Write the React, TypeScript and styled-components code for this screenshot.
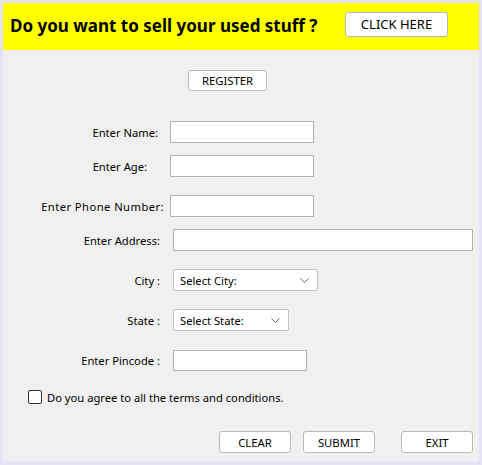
import styled, { createGlobalStyle } from "styled-components";

const GlobalStyle = createGlobalStyle`
  body {
    margin: 0;
    font-family: "Noto Sans", "Open Sans", Arial, sans-serif;
  }
`;

const Frame = styled.div`
  width: 482px;
  height: 465px;
  box-sizing: border-box;
  padding: 3px 3px 4px 3px;
  background: #e4e4f6;
`;

const Panel = styled.div`
  height: 100%;
  background: #f0f0f0;
  display: flex;
  flex-direction: column;
`;

const Banner = styled.div`
  height: 47px;
  background: #ffff00;
  display: flex;
  align-items: center;
  padding-left: 7px;
`;

const Heading = styled.h1`
  margin: 0 0 3px 0;
  font-size: 17px;
  font-weight: 700;
  color: #000;
`;

const WinButton = styled.button<{ $w: number; $h?: number; $gap?: number }>`
  width: ${(p) => p.$w}px;
  height: ${(p) => p.$h ?? 22}px;
  margin-left: ${(p) => p.$gap ?? 0}px;
  box-sizing: border-box;
  background: #fff;
  border: 1px solid #b9b9b9;
  border-radius: 3px;
  font-family: "Noto Sans", "Open Sans", Arial, sans-serif;
  font-size: 11.3px;
  color: #000;
  padding: 0;
  cursor: pointer;
`;

const ClickButton = styled(WinButton)`
  margin-left: auto;
  margin-right: 31px;
  margin-bottom: 5px;
  font-size: 13px;
`;

const RegisterRow = styled.div`
  margin-top: 20px;
  padding-left: 185px;
  display: flex;
`;

const Row = styled.div<{ $top: number }>`
  margin-top: ${(p) => p.$top}px;
  height: 22px;
  display: flex;
  align-items: center;
`;

const Label = styled.label<{ $end: number; $spacing?: number }>`
  width: ${(p) => p.$end - 3}px;
  flex: none;
  text-align: right;
  font-size: 11.2px;
  letter-spacing: ${(p) => p.$spacing ?? 0}px;
  color: #000;
  white-space: nowrap;
`;

const TextBox = styled.input<{ $gap: number; $w: number; $h?: number }>`
  margin-left: ${(p) => p.$gap}px;
  width: ${(p) => p.$w}px;
  height: ${(p) => p.$h ?? 22}px;
  box-sizing: border-box;
  border: 1px solid #b4b4b4;
  background: #fff;
  padding: 0 4px;
  font-size: 11.2px;
  outline: none;
`;

const Combo = styled.div<{ $gap: number; $w: number }>`
  margin-left: ${(p) => p.$gap}px;
  width: ${(p) => p.$w}px;
  height: 22px;
  box-sizing: border-box;
  border: 1px solid #c4c4c4;
  border-radius: 2px;
  background: #fff;
  display: flex;
  align-items: center;
  justify-content: space-between;
  padding: 0 8px 0 6px;
  font-size: 11.2px;
  color: #000;
`;

const CheckRow = styled.div`
  margin-top: 15px;
  height: 22px;
  padding-left: 25px;
  display: flex;
  align-items: center;
  gap: 5px;
  font-size: 11.2px;
  color: #000;
`;

const CheckBox = styled.span`
  width: 14px;
  height: 14px;
  box-sizing: border-box;
  border: 1px solid #333;
  border-radius: 2px;
  background: #fff;
`;

const Actions = styled.div`
  margin-top: 23px;
  padding-left: 216px;
  display: flex;
`;

const Chevron = () => (
  <svg width="9" height="5" viewBox="0 0 9 5">
    <path d="M0.5 0.5 L4.5 4.5 L8.5 0.5" fill="none" stroke="#6a6a6a" strokeWidth="1" />
  </svg>
);

type Field = {
  label: string;
  top: number;
  end: number;
  x: number;
  w: number;
  h?: number;
  spacing?: number;
  select?: string;
};

const fields: Field[] = [
  { label: "Enter Name:", top: 30, end: 158, x: 170, w: 144 },
  { label: "Enter Age:", top: 12, end: 147, x: 170, w: 144 },
  { label: "Enter Phone Number:", top: 18, end: 164, x: 170, w: 144, spacing: 0.45 },
  { label: "Enter Address:", top: 12, end: 160, x: 173, w: 300 },
  { label: "City :", top: 18, end: 160, x: 173, w: 145, select: "Select City:" },
  { label: "State :", top: 18, end: 160, x: 173, w: 116, select: "Select State:" },
  { label: "Enter Pincode :", top: 18, end: 160, x: 173, w: 134, h: 21 },
];

export default function App() {
  return (
    <>
      <GlobalStyle />
      <Frame>
        <Panel>
          <Banner>
            <Heading>Do you want to sell your used stuff ?</Heading>
            <ClickButton $w={103} $h={25}>CLICK HERE</ClickButton>
          </Banner>
          <RegisterRow>
            <WinButton $w={79} $h={21}>REGISTER</WinButton>
          </RegisterRow>
          {fields.map((f) => (
            <Row key={f.label} $top={f.top}>
              <Label $end={f.end} $spacing={f.spacing}>{f.label}</Label>
              {f.select ? (
                <Combo $gap={f.x - f.end} $w={f.w}>
                  <span>{f.select}</span>
                  <Chevron />
                </Combo>
              ) : (
                <TextBox $gap={f.x - f.end} $w={f.w} $h={f.h} />
              )}
            </Row>
          ))}
          <CheckRow>
            <CheckBox />
            <span>Do you agree to all the terms and conditions.</span>
          </CheckRow>
          <Actions>
            <WinButton $w={72}>CLEAR</WinButton>
            <WinButton $w={72} $gap={12}>SUBMIT</WinButton>
            <WinButton $w={72} $gap={26}>EXIT</WinButton>
          </Actions>
        </Panel>
      </Frame>
    </>
  );
}
